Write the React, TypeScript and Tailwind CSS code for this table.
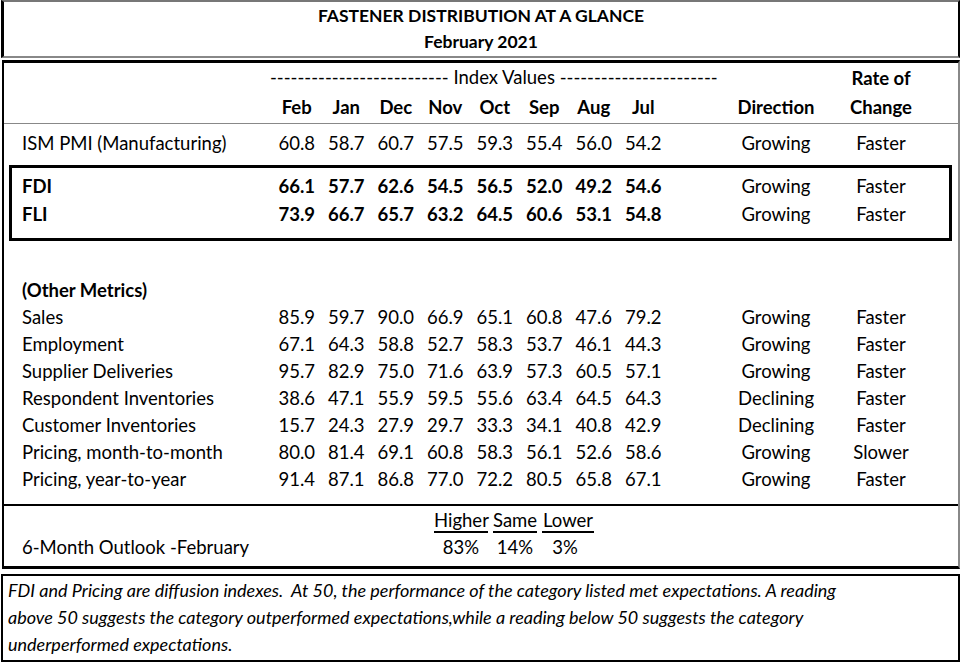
import React from "react";

const months = ["Feb", "Jan", "Dec", "Nov", "Oct", "Sep", "Aug", "Jul"];

type RowData = { label: string; values: string[]; dir: string; rate: string };

const ism: RowData = {
  label: "ISM PMI (Manufacturing)",
  values: ["60.8", "58.7", "60.7", "57.5", "59.3", "55.4", "56.0", "54.2"],
  dir: "Growing",
  rate: "Faster",
};

const fdi: RowData[] = [
  { label: "FDI", values: ["66.1", "57.7", "62.6", "54.5", "56.5", "52.0", "49.2", "54.6"], dir: "Growing", rate: "Faster" },
  { label: "FLI", values: ["73.9", "66.7", "65.7", "63.2", "64.5", "60.6", "53.1", "54.8"], dir: "Growing", rate: "Faster" },
];

const others: RowData[] = [
  { label: "Sales", values: ["85.9", "59.7", "90.0", "66.9", "65.1", "60.8", "47.6", "79.2"], dir: "Growing", rate: "Faster" },
  { label: "Employment", values: ["67.1", "64.3", "58.8", "52.7", "58.3", "53.7", "46.1", "44.3"], dir: "Growing", rate: "Faster" },
  { label: "Supplier Deliveries", values: ["95.7", "82.9", "75.0", "71.6", "63.9", "57.3", "60.5", "57.1"], dir: "Growing", rate: "Faster" },
  { label: "Respondent Inventories", values: ["38.6", "47.1", "55.9", "59.5", "55.6", "63.4", "64.5", "64.3"], dir: "Declining", rate: "Faster" },
  { label: "Customer Inventories", values: ["15.7", "24.3", "27.9", "29.7", "33.3", "34.1", "40.8", "42.9"], dir: "Declining", rate: "Faster" },
  { label: "Pricing, month-to-month", values: ["80.0", "81.4", "69.1", "60.8", "58.3", "56.1", "52.6", "58.6"], dir: "Growing", rate: "Slower" },
  { label: "Pricing, year-to-year", values: ["91.4", "87.1", "86.8", "77.0", "72.2", "80.5", "65.8", "67.1"], dir: "Growing", rate: "Faster" },
];

const grid = "grid grid-cols-[250px_repeat(8,49.5px)_178px_70px] items-center";

function Row({ r, bold = false, h = "h-[27px] pt-[3px]" }: { r: RowData; bold?: boolean; h?: string }) {
  return (
    <div className={`${grid} ${h}`}>
      <div className={`whitespace-nowrap ${bold ? "font-bold" : ""}`}>{r.label}</div>
      {r.values.map((v, i) => (
        <div key={i} className={`text-center ${bold ? "font-bold" : ""}`}>
          {v}
        </div>
      ))}
      <div className="pl-[38px] text-center">{r.dir}</div>
      <div className="text-center">{r.rate}</div>
    </div>
  );
}

export default function App() {
  return (
    <div
      className="w-[963px] h-[664px] bg-white text-black text-[18.5px] overflow-hidden"
      style={{ fontFamily: "Lato, 'Liberation Sans', sans-serif" }}
    >
      {/* Title */}
      <div className="ml-[1px] w-[959px] h-[58px] border-t-2 border-b-2 border-t-[#777] border-b-[#888] border-l-[3px] border-l-black border-r-2 border-r-black pt-[1px] font-bold text-[17.5px] text-center">
        <div className="h-[26px] leading-[26px]">FASTENER DISTRIBUTION AT A GLANCE</div>
        <div className="h-[26px] leading-[26px]">February 2021</div>
      </div>

      {/* Main table */}
      <div className="mt-[2px] ml-[2px] w-[958px] h-[509px] border-t-[3px] border-t-black border-l-2 border-l-black border-r-2 border-r-[#888] border-b-[3px] border-b-black">
        <div className="h-[61px] border-b border-b-[#888] pl-[18px]">
          <div className="h-[28px] flex items-center pt-[2px] pl-[248px] whitespace-pre">
            {"-------------------------- Index Values -----------------------"}
          </div>
          <div className={`${grid} h-[30px] pt-[2px]`}>
            <div></div>
            {months.map((m) => (
              <div key={m} className="text-center font-bold">
                {m}
              </div>
            ))}
            <div className="pl-[38px] text-center font-bold">Direction</div>
            <div className="text-center font-bold leading-[29px] -mt-[29px] whitespace-nowrap">
              Rate of
              <br />
              Change
            </div>
          </div>
        </div>
        <div className="pl-[18px]">
          <Row r={ism} h="h-[36px] pt-[3px]" />
        </div>
        <div className="mt-[5px] ml-[5px] w-[943px] h-[76px] border-[3px] border-black pt-[4px] pl-[10px]">
          {fdi.map((r) => (
            <Row key={r.label} r={r} bold h="h-[28px] pt-[1px]" />
          ))}
        </div>
        <div className="mt-[35px] pl-[18px]">
          <div className="h-[27px] flex items-center pt-[3px] font-bold">(Other Metrics)</div>
          {others.map((r) => (
            <Row key={r.label} r={r} h="h-[27px] pt-[1px]" />
          ))}
        </div>
        <div className="mt-[12px] border-t-2 border-t-black h-[59px] pl-[18px] pt-[1px] grid grid-cols-[407px_54px_44px_52px] gap-x-[5px] grid-rows-[28px_26px] items-center">
          <div></div>
          <div className="border-b-2 border-black leading-[22px] text-center whitespace-nowrap">Higher</div>
          <div className="border-b-2 border-black leading-[22px] text-center whitespace-nowrap">Same</div>
          <div className="border-b-2 border-black leading-[22px] text-center whitespace-nowrap">Lower</div>
          <div className="whitespace-nowrap">6-Month Outlook -February</div>
          <div className="text-center">83%</div>
          <div className="text-center">14%</div>
          <div className="text-center pr-[6px]">3%</div>
        </div>
      </div>

      {/* Footer */}
      <div className="mt-[5px] ml-[1px] w-[959px] h-[88px] border-2 border-black pt-[1px] pl-[5px] italic text-[18px]">
        <div className="h-[27px] leading-[27px] whitespace-pre">
          {"FDI and Pricing are diffusion indexes.  At 50, the performance of the category listed met expectations. A reading"}
        </div>
        <div className="h-[27px] leading-[27px] whitespace-pre">
          {"above 50 suggests the category outperformed expectations,while a reading below 50 suggests the category"}
        </div>
        <div className="h-[27px] leading-[27px] whitespace-pre">{"underperformed expectations."}</div>
      </div>
    </div>
  );
}
